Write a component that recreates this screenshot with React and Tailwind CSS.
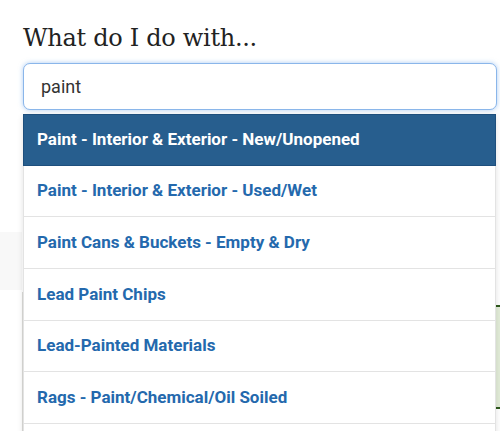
import React from 'react';

const results = [
  'Paint - Interior & Exterior - New/Unopened',
  'Paint - Interior & Exterior - Used/Wet',
  'Paint Cans & Buckets - Empty & Dry',
  'Lead Paint Chips',
  'Lead-Painted Materials',
  'Rags - Paint/Chemical/Oil Soiled',
];

export default function App() {
  return (
    <div className="relative w-[500px] h-[431px] overflow-hidden bg-white font-['Roboto',sans-serif]">
      <div className="px-[23px] pt-[22px]">
        <h2 className="font-['DejaVu_Serif',serif] text-[24px] leading-[32px] text-[#222] tracking-[-0.3px]">
          What do I do with...
        </h2>
        <div className="relative mt-[9px] w-[474px]">
          <input
            readOnly
            value="paint"
            className="w-full h-[47px] rounded-[7px] border border-[#8ab6ea] bg-white pl-[17px] text-[18px] text-[#333] outline-none shadow-[0_0_5px_rgba(102,160,232,0.55)] font-['Roboto',sans-serif]"
          />
          {/* autocomplete menu over the page */}
          <ul className="absolute z-10 left-0 top-[51px] w-[473px] bg-white shadow-[0_2px_6px_rgba(0,0,0,0.12)]">
            {results.map((r, i) => (
              <li
                key={r}
                className={
                  i === 0
                    ? 'h-[51.7px] flex items-center pl-[13px] bg-[#275e8e] border border-[#1e4f7d] text-white font-bold text-[17px]'
                    : 'h-[51.7px] flex items-center pl-[13px] border-x border-b border-[#e3e3e3] text-[#2469ad] font-bold text-[17px]'
                }
              >
                {r}
              </li>
            ))}
            <li className="h-[20px] border-x border-[#e3e3e3]" />
          </ul>
        </div>
      </div>

      {/* page content partly hidden behind the menu */}
      <div className="mt-[122px] flex justify-between items-start">
        <div className="flex flex-col w-[24px]">
          <div className="w-[22px] h-[58px] bg-[#f8f8f8]" />
          <div className="ml-[22px] mt-[2px] w-[2px] h-[140px] bg-[#dcdcd8]" />
        </div>
        <div className="mt-[73px] w-[4px] h-[104px] bg-[#e2ecd8] border-y-2 border-[#2f5a1e]" />
      </div>
    </div>
  );
}
